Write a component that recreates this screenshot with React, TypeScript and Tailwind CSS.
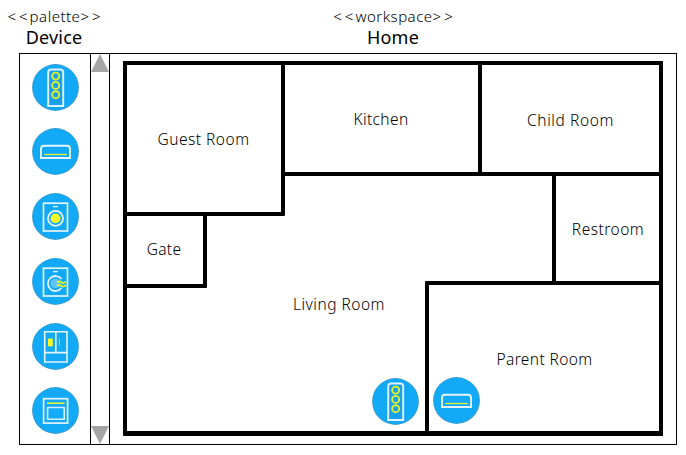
import type { ReactNode } from 'react';

type DeviceKind = 'speaker' | 'aircon' | 'washer' | 'dryer' | 'fridge' | 'oven';

const drawings: Record<DeviceKind, ReactNode> = {
  speaker: (
    <>
      <path d="M16.2 42V8.5q0-3 3-3h9q3 0 3 3V42z" fill="#18a0ec" stroke="#e0f2fc" strokeWidth="1.9" />
      <g stroke="#dff02c" strokeWidth="1.9">
        <circle cx="23.7" cy="12.1" r="3.5" />
        <circle cx="23.7" cy="21.4" r="3.5" />
        <circle cx="23.7" cy="30.7" r="3.5" />
      </g>
    </>
  ),
  aircon: (
    <>
      <path d="M9 30V21q0-3.2 3.2-3.2h22.6q3.2 0 3.2 3.2v9z" stroke="#e3f4fd" strokeWidth="1.9" />
      <path d="M12.2 26.5h22.6" stroke="#e6f52c" strokeWidth="1.3" />
    </>
  ),
  washer: (
    <>
      <rect x="11.5" y="10.2" width="24" height="27.8" stroke="#e3f4fd" strokeWidth="1.7" />
      <path d="M21 13.6h5" stroke="#e3f4fd" strokeWidth="1.3" />
      <circle cx="23.5" cy="25.4" r="7.5" stroke="#e3f4fd" strokeWidth="1.8" />
      <circle cx="23.5" cy="25.4" r="4.9" fill="#faff22" />
    </>
  ),
  dryer: (
    <>
      <rect x="11.5" y="10.2" width="24" height="27.8" stroke="#e3f4fd" strokeWidth="1.7" />
      <path d="M21 13.6h5" stroke="#e3f4fd" strokeWidth="1.3" />
      <circle cx="23.5" cy="25.4" r="4.9" fill="#63c4f6" />
      <path d="M29.5 21A7.5 7.5 0 1 0 29.5 30" stroke="#e3f4fd" strokeWidth="1.8" />
      <path d="M25 24.5q2.2-2 4.4-.2t4.6-.6M25 28q2.2-2 4.4-.2t4.6-.6" stroke="#dff02c" strokeWidth="1.8" />
    </>
  ),
  fridge: (
    <>
      <path d="M12.7 8.8h22.3v30.2H12.7zM12.7 29.6h22.3M23.8 8.8v20.8" stroke="#e3f4fd" strokeWidth="1.6" />
      <rect x="16" y="15.6" width="4.7" height="7.7" fill="#faff22" />
      <path d="M27.5 15.5v7" stroke="#8bd4f9" strokeWidth="1" />
    </>
  ),
  oven: (
    <>
      <rect x="11.6" y="11.7" width="24" height="24.4" stroke="#e3f4fd" strokeWidth="1.7" />
      <path d="M15 16.2h17.5" stroke="#e6f52c" strokeWidth="1.6" />
      <path d="M15.6 20.5h16.6v11.8h-16.6z" stroke="#d4effc" strokeWidth="1.6" />
    </>
  ),
};

function Device({ kind, className = '' }: { kind: DeviceKind; className?: string }) {
  return (
    <svg className={`size-[47px] shrink-0 ${className}`} viewBox="0 0 47 47" fill="none">
      <circle cx="23.5" cy="23.5" r="23.4" fill="#3a99ca" />
      <circle cx="23.4" cy="23.3" r="22.6" fill="#12aaf7" />
      {drawings[kind]}
    </svg>
  );
}

function Heading({ kind, title, className }: { kind: string; title: string; className: string }) {
  return (
    <div className={`flex flex-col items-center whitespace-nowrap ${className}`}>
      <div className="flex h-[19px] items-center text-[15px] leading-[19px]">
        <span className="-mr-px tracking-[3px]">&lt;&lt;</span>
        <span className="tracking-[0.5px]">{kind}</span>
        <span className="-mr-[3px] tracking-[3px]">&gt;&gt;</span>
      </div>
      <div className="text-lg leading-[22px] font-normal tracking-[0.2px]">{title}</div>
    </div>
  );
}

function Room({ name, className }: { name: string; className: string }) {
  return (
    <div className={`flex items-center justify-center rounded-[1px] border-4 border-black whitespace-nowrap ${className}`}>
      <span>{name}</span>
    </div>
  );
}

const palette: DeviceKind[] = ['speaker', 'aircon', 'washer', 'dryer', 'fridge', 'oven'];

export default function App() {
  return (
    <main className="relative h-[455px] w-[686px] overflow-hidden bg-white pt-[7px] pl-[19px] font-['Noto_Sans',sans-serif] text-base font-light text-black">
      <header className="flex h-[46px]">
        <Heading kind="palette" title="Device" className="-ml-[16px] w-[102px]" />
        <Heading kind="workspace" title="Home" className="ml-[226px] w-[124px]" />
      </header>

      <div className="flex h-[392px] w-[658px] border border-black">
        <aside className="flex w-[71px] flex-col items-center gap-[18px] border-r border-black pt-[10px]">
          {palette.map((kind) => (
            <Device key={kind} kind={kind} className="first:-mb-px last:-mt-px" />
          ))}
        </aside>
        <div className="flex w-[19px] flex-col justify-between border-r border-black">
          <svg className="h-[18px] w-[18px]" viewBox="0 0 18 18"><path d="M9 0l9 18H0z" fill="#a6a6a6" /></svg>
          <svg className="h-[18px] w-[18px]" viewBox="0 0 18 18"><path d="M0 0h18L9 18z" fill="#a6a6a6" /></svg>
        </div>

        <section className="mt-[7px] ml-[13px] grid h-[375px] w-[540px] grid-cols-[80px_4px_74px_4px_140px_53px_4px_70px_111px] grid-rows-[111px_4px_36px_4px_65px_4px_3px_148px] text-[15.5px]">
          <Room name="Living Room" className="col-[1/10] row-[1/9] border-b-[5px] pt-[114px] pr-[108px] tracking-[0.5px]" />
          <Room name="Guest Room" className="col-[1/5] row-[1/5] pt-[2px] pr-px tracking-[0.5px]" />
          <Room name="Kitchen" className="col-[4/8] row-[1/3] pt-[2px] pr-[1px] tracking-[0.4px]" />
          <Room name="Child Room" className="col-[7/10] row-[1/3] pt-[4px] tracking-[0.6px]" />
          <Room name="Gate" className="col-[1/3] row-[4/8] pr-[2px] tracking-[0.3px]" />
          <Room name="Restroom" className="col-[9/10] row-[2/7] pt-[2px] pl-px tracking-[0.5px]" />
          <Room name="Parent Room" className="col-[6/10] row-[6/9] border-b-[5px] pt-[3px] pl-px tracking-[0.4px]" />
        </section>
      </div>

      <Device kind="speaker" className="absolute top-[378px] left-[372px]" />
      <Device kind="aircon" className="absolute top-[377px] left-[433px]" />
    </main>
  );
}
